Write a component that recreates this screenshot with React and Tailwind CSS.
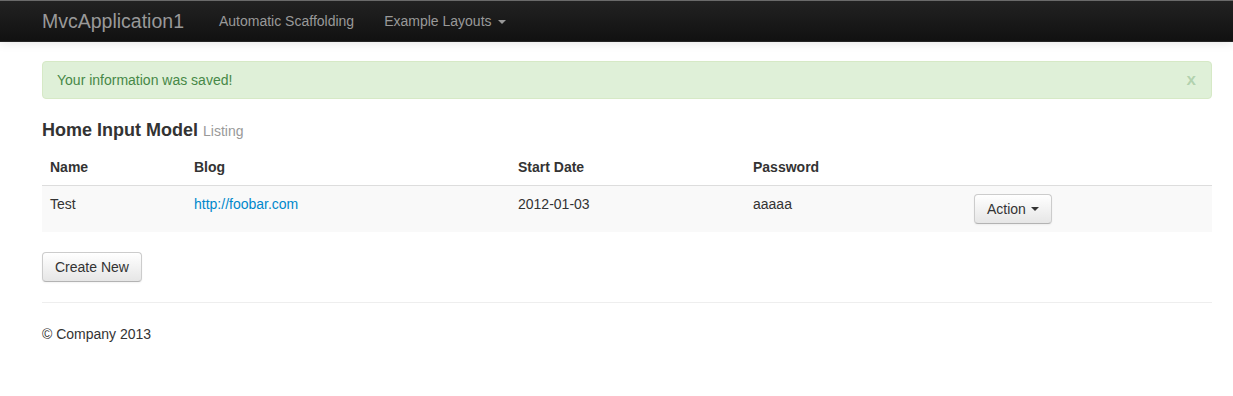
const Caret = ({ className }) => (
  <span className={`inline-block w-0 h-0 border-x-4 border-x-transparent border-t-4 align-middle ${className}`} />
);

const Button = ({ children, className = "" }) => (
  <button
    className={`inline-flex items-center px-3 py-1 text-[14px] leading-5 text-[#333] rounded border border-[#cccccc] border-b-[#b3b3b3] bg-gradient-to-b from-white to-[#e6e6e6] shadow-[inset_0_1px_0_rgba(255,255,255,0.2),0_1px_2px_rgba(0,0,0,0.05)] ${className}`}
  >
    {children}
  </button>
);

const rows = [
  { name: "Test", blog: "http://foobar.com", start: "2012-01-03", password: "aaaaa" },
];

export default function App() {
  return (
    <div className="min-h-screen bg-white text-[14px] leading-5 text-[#333]" style={{ fontFamily: '"Liberation Sans", Arial, sans-serif' }}>
      {/* Navbar */}
      <div className="h-[42px] border-t border-t-[#6a6a6a] border-b border-b-[#252525] bg-gradient-to-b from-[#222222] to-[#111111] shadow-[0_1px_10px_rgba(0,0,0,0.1)]">
        <div className="w-[1170px] ml-[42px] flex items-center h-full">
          <a className="text-[19.5px] leading-5 text-[#999] pr-5">MvcApplication1</a>
          <a className="text-[#999] px-[15px]">Automatic Scaffolding</a>
          <a className="text-[#999] px-[15px] flex items-center gap-[6px]">
            Example Layouts <Caret className="border-t-[#999] mt-[2px]" />
          </a>
        </div>
      </div>

      <div className="w-[1170px] ml-[42px]">
        {/* Alert */}
        <div className="mt-[19px] flex items-center justify-between bg-[#dff0d8] border border-[#d6e9c6] rounded text-[#468847] pl-[14px] pr-[15px] py-2">
          <span>Your information was saved!</span>
          <span className="text-[17px] font-bold text-[#468847]/30 leading-5">x</span>
        </div>

        {/* Heading */}
        <h3 className="mt-[19px] text-[18px] leading-6 font-bold text-[#333]">
          Home Input Model <small className="text-[14px] font-normal text-[#999]">Listing</small>
        </h3>

        {/* Table */}
        <table className="w-full mt-[6px] border-collapse">
          <thead>
            <tr className="text-left">
              <th className="w-[144px] p-2 font-bold">Name</th>
              <th className="w-[324px] p-2 font-bold">Blog</th>
              <th className="w-[235px] p-2 font-bold">Start Date</th>
              <th className="w-[221px] p-2 font-bold">Password</th>
              <th className="p-2"></th>
            </tr>
          </thead>
          <tbody>
            {rows.map((r) => (
              <tr key={r.name} className="bg-[#f9f9f9] border-t border-[#dddddd]">
                <td className="p-2 align-top">{r.name}</td>
                <td className="p-2 align-top">
                  <a className="text-[#0088cc]">{r.blog}</a>
                </td>
                <td className="p-2 align-top">{r.start}</td>
                <td className="p-2 align-top">{r.password}</td>
                <td className="p-2 align-top">
                  <Button className="gap-[5px]">
                    Action <Caret className="border-t-[#333]" />
                  </Button>
                </td>
              </tr>
            ))}
          </tbody>
        </table>

        <div className="mt-5">
          <Button>Create New</Button>
        </div>

        <hr className="mt-5 border-t border-[#eeeeee]" />

        <footer className="mt-[21px]">
          <p>© Company 2013</p>
        </footer>
      </div>
    </div>
  );
}
